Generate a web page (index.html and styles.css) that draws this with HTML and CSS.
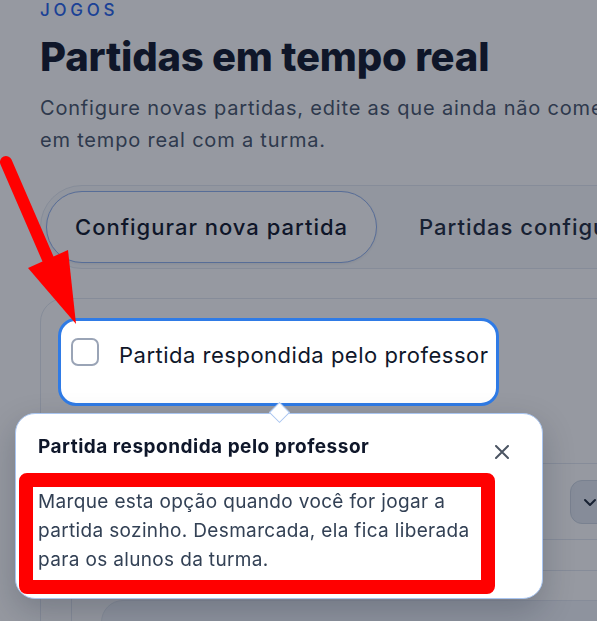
FILE: index.html
```html
<!DOCTYPE html>
<html lang="pt-BR">
<head>
<meta charset="utf-8">
<title>Partidas em tempo real</title>
<link rel="stylesheet" href="styles.css">
</head>
<body>
<main class="page">
  <p class="eyebrow">JOGOS</p>
  <h1 class="title">Partidas em tempo real</h1>
  <p class="subtitle">Configure novas partidas, edite as que ainda não começaram e acompanhe em tempo real com a turma.</p>

  <nav class="tabs">
    <button class="tab tab-active">Configurar nova partida</button>
    <button class="tab">Partidas configuradas</button>
  </nav>

  <section class="card">
    <div class="option-wrap">
      <label class="option-row">
        <span class="checkbox"></span>
        <span class="option-label">Partida respondida pelo professor</span>
      </label>

      <div class="popover">
        <span class="popover-arrow"></span>
        <div class="popover-head">
          <h2 class="popover-title">Partida respondida pelo professor</h2>
          <button class="popover-close" aria-label="Fechar">
            <svg width="14" height="14" viewBox="0 0 14 14"><path d="M1 1L13 13M13 1L1 13" stroke="#4b5563" stroke-width="2" stroke-linecap="round"/></svg>
          </button>
        </div>
        <p class="popover-text">Marque esta opção quando você for jogar a partida sozinho. Desmarcada, ela fica liberada para os alunos da turma.</p>
        <div class="annotation-box"></div>
      </div>
    </div>

    <div class="field-row">
      <div class="select">
        <svg width="14" height="14" viewBox="0 0 14 14"><path d="M2 5l5 5 5-5" fill="none" stroke="#1e293b" stroke-width="2" stroke-linecap="round" stroke-linejoin="round"/></svg>
      </div>
    </div>
    <div class="sub-panel">
      <div class="sub-box"></div>
    </div>
  </section>
</main>

<div class="overlay"></div>

<svg class="annotation-arrow" width="100" height="340" viewBox="0 0 100 340">
  <line x1="6" y1="162" x2="48" y2="259" stroke="#ff0000" stroke-width="12" stroke-linecap="round"/>
  <polygon points="28,268 68,250 76,324" fill="#ff0000"/>
</svg>
</body>
</html>
```

FILE: styles.css
```css
* { box-sizing: border-box; }

html, body {
  margin: 0;
  width: 597px;
  height: 621px;
  overflow: hidden;
  background: #ffffff;
  font-family: "Inter", "Noto Sans", sans-serif;
}

.page {
  padding: 0 0 0 40px;
  width: 900px;
}

.eyebrow {
  margin: 0;
  font-size: 17px;
  font-weight: 500;
  line-height: 20px;
  letter-spacing: 0.22em;
  color: #2563eb;
}

.title {
  margin: 13px 0 0;
  font-size: 40px;
  line-height: 48px;
  font-weight: 800;
  letter-spacing: -0.2px;
  color: #0f172a;
}

.subtitle {
  margin: 11px 0 0;
  font-size: 20px;
  line-height: 32px;
  letter-spacing: 0.8px;
  color: #475569;
  width: 790px;
}

.tabs {
  margin-top: 29px;
  display: flex;
  align-items: center;
  gap: 13px;
  padding: 5px;
  height: 84px;
  border: 1px solid #e2e8f0;
  border-radius: 42px;
  background: #f8fafc;
  width: 700px;
}

.tab {
  font: 500 22px/1 "Inter", "Noto Sans", sans-serif;
  letter-spacing: 1px;
  color: #1e293b;
  background: transparent;
  border: 1px solid transparent;
  border-radius: 36px;
  height: 72px;
  padding: 0 28px;
  white-space: nowrap;
}

.tab-active {
  background: #ffffff;
  border-color: #8fb0ee;
  color: #0f172a;
  box-shadow: 0 1px 3px rgba(15, 23, 42, 0.08);
}

.card {
  margin-top: 29px;
  border: 1px solid #e2e8f0;
  border-radius: 24px;
  background: #ffffff;
  padding: 19px 0 0 17px;
  width: 660px;
  height: 400px;
}

.option-wrap {
  position: relative;
  z-index: 20;
  width: 441px;
}

.option-row {
  display: flex;
  align-items: flex-start;
  gap: 20px;
  width: 441px;
  height: 88px;
  padding: 17px 8px 0 10px;
  background: #ffffff;
  border: 3px solid #2f7be6;
  border-radius: 18px;
}

.checkbox {
  flex: none;
  width: 28px;
  height: 28px;
  border: 2px solid #9aa4b6;
  border-radius: 7px;
  background: #ffffff;
}

.option-label {
  font-size: 22px;
  line-height: 28px;
  letter-spacing: 0.5px;
  padding-top: 3px;
  color: #0f172a;
  white-space: nowrap;
}

.popover {
  position: absolute;
  top: 95px;
  left: -43px;
  width: 528px;
  height: 186px;
  background: #ffffff;
  border: 1.5px solid #a9c5f0;
  border-radius: 20px;
  box-shadow: 0 12px 32px rgba(15, 23, 42, 0.22);
  padding: 21px 33px 0 22px;
}

.popover-arrow {
  position: absolute;
  top: -9px;
  left: 256px;
  width: 15px;
  height: 15px;
  background: #ffffff;
  border: 1.5px solid #a9c5f0;
  transform: rotate(45deg);
}

.popover-head {
  display: flex;
  justify-content: space-between;
  align-items: flex-start;
}

.popover-title {
  margin: 0;
  font-size: 19px;
  line-height: 24px;
  font-weight: 700;
  letter-spacing: 0.5px;
  color: #0f172a;
}

.popover-close {
  border: 0;
  background: transparent;
  padding: 0;
  margin-top: 10px;
  width: 14px;
  height: 14px;
  display: flex;
}

.popover-text {
  margin: 28px 0 0;
  width: 452px;
  font-size: 19px;
  line-height: 29px;
  letter-spacing: 0.35px;
  color: #334155;
}

.annotation-box {
  position: absolute;
  left: 3px;
  top: 59px;
  width: 476px;
  height: 121px;
  border: 14px solid #ff0000;
  border-radius: 8px;
  pointer-events: none;
}

.field-row {
  margin-top: 57px;
  margin-left: -17px;
  height: 77px;
  border-top: 1px solid #e2e8f0;
  border-bottom: 1px solid #e2e8f0;
  display: flex;
  align-items: center;
  padding-left: 529px;
}

.select {
  width: 90px;
  height: 44px;
  border: 1px solid #cbd5e1;
  border-radius: 12px;
  background: #e2e8f0;
  display: flex;
  align-items: center;
  padding-left: 12px;
}

.sub-panel {
  margin: 30px 0 0 13px;
  border-left: 1px solid #e2e8f0;
  border-top: 1px solid #e2e8f0;
  height: 100px;
  padding: 29px 0 0 29px;
}

.sub-box {
  height: 80px;
  border: 1px solid #e2e8f0;
  border-radius: 22px;
  background: #f1f5f9;
}

.overlay {
  position: fixed;
  inset: 0;
  z-index: 10;
  background: rgba(15, 23, 42, 0.44);
}

.annotation-arrow {
  position: absolute;
  top: 0;
  left: 0;
  z-index: 40;
}
```
